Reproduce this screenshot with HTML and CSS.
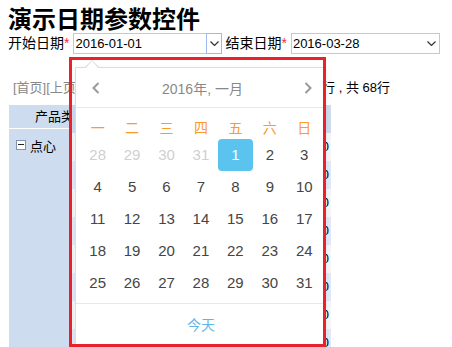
FILE: index.html
```html
<!DOCTYPE html>
<html lang="zh-CN">
<head>
    <meta charset="UTF-8">
    <meta name="viewport" content="width=device-width, initial-scale=1.0">
    <title>演示日期参数控件</title>
    <link rel="stylesheet" href="styles.css">
</head>
<body>
    <h1 class="title">演示日期参数控件</h1>

    <div class="params">
        <label class="param-label">开始日期<span class="req">*</span></label>
        <div class="date-field focus">
            <span class="value">2016-01-01</span>
            <span class="drop">
                <svg width="9" height="5" viewBox="0 0 9 5"><path d="M0.5 0.5 L4.5 4.5 L8.5 0.5" fill="none" stroke="#333" stroke-width="1.2"/></svg>
            </span>

            <div class="calendar">
                <div class="cal-head">
                    <span class="cal-nav">
                        <svg width="8" height="12" viewBox="0 0 8 12"><path d="M6.5 1 L1.5 6 L6.5 11" fill="none" stroke="#9a9a9a" stroke-width="2"/></svg>
                    </span>
                    <span class="cal-title">2016年, 一月</span>
                    <span class="cal-nav">
                        <svg width="8" height="12" viewBox="0 0 8 12"><path d="M1.5 1 L6.5 6 L1.5 11" fill="none" stroke="#9a9a9a" stroke-width="2"/></svg>
                    </span>
                </div>
                <div class="cal-body">
                    <div class="cal-grid">
                        <span class="wk">一</span><span class="wk">二</span><span class="wk">三</span><span class="wk">四</span><span class="wk">五</span><span class="wk">六</span><span class="wk">日</span>

                        <span class="day muted">28</span><span class="day muted">29</span><span class="day muted">30</span><span class="day muted">31</span><span class="day selected">1</span><span class="day">2</span><span class="day">3</span>
                        <span class="day">4</span><span class="day">5</span><span class="day">6</span><span class="day">7</span><span class="day">8</span><span class="day">9</span><span class="day">10</span>
                        <span class="day">11</span><span class="day">12</span><span class="day">13</span><span class="day">14</span><span class="day">15</span><span class="day">16</span><span class="day">17</span>
                        <span class="day">18</span><span class="day">19</span><span class="day">20</span><span class="day">21</span><span class="day">22</span><span class="day">23</span><span class="day">24</span>
                        <span class="day">25</span><span class="day">26</span><span class="day">27</span><span class="day">28</span><span class="day">29</span><span class="day">30</span><span class="day">31</span>
                    </div>
                </div>
                <div class="cal-foot"><span class="today">今天</span></div>
            </div>
        </div>

        <label class="param-label">结束日期<span class="req">*</span></label>
        <div class="date-field">
            <span class="value">2016-03-28</span>
            <span class="drop">
                <svg width="9" height="5" viewBox="0 0 9 5"><path d="M0.5 0.5 L4.5 4.5 L8.5 0.5" fill="none" stroke="#333" stroke-width="1.2"/></svg>
            </span>
        </div>
    </div>

    <div class="pager">
        <span class="nav">[首页][上页][下页][尾页]</span>
        <span class="info">第1-20行 , 共 68行</span>
    </div>

    <div class="report">
        <div class="group-col">
            <div class="group-head">产品类别</div>
            <div class="group-body"><span class="toggle"></span>点心</div>
        </div>
        <div class="data-col">
            <div class="data-head"><span class="cell">产品名称</span><span class="cell num"></span></div>
            <div class="data-row"><span class="cell">饼干</span><span class="cell num">120</span></div>
            <div class="data-row"><span class="cell">糖果</span><span class="cell num">340</span></div>
            <div class="data-row"><span class="cell">桂花糕</span><span class="cell num">210</span></div>
            <div class="data-row"><span class="cell">花生</span><span class="cell num">450</span></div>
            <div class="data-row"><span class="cell">蛋糕</span><span class="cell num">180</span></div>
            <div class="data-row"><span class="cell">薯条</span><span class="cell num">260</span></div>
            <div class="data-row"><span class="cell">燕麦片</span><span class="cell num">300</span></div>
            <div class="data-row"><span class="cell">山渣片</span><span class="cell num">150</span></div>
        </div>
    </div>

    <div class="highlight"></div>
</body>
</html>
```

FILE: styles.css
```css
html, body {
    height: 100%;
    overflow: hidden;
}
body {
    margin: 0;
    padding: 4px 8px 0;
    font-family: "Liberation Sans", "Noto Sans CJK SC", sans-serif;
    font-size: 13px;
    color: #000;
    background: #fff;
}
.title {
    margin: 0;
    font-family: "Noto Sans CJK SC", sans-serif;
    font-size: 24px;
    line-height: 28px;
    font-weight: bold;
}

/* parameter bar */
.params {
    display: flex;
    align-items: center;
    height: 21px;
    margin-top: 1px;
}
.param-label {
    font-size: 14px;
    line-height: 21px;
    margin-right: 4px;
}
.req {
    color: #e8333a;
}
.date-field {
    position: relative;
    display: flex;
    align-items: center;
    width: 149px;
    height: 21px;
    box-sizing: border-box;
    border: 1px solid #c8c8c8;
}
.date-field + .param-label {
    margin-left: 3px;
}
.date-field .value {
    flex: 1;
    padding-left: 1px;
    font-size: 13px;
}
.drop {
    display: flex;
    align-items: center;
    justify-content: center;
    width: 16px;
    height: 21px;
    margin: -1px -1px -1px 0;
    box-sizing: border-box;
}
.focus .drop {
    border: 1px solid #9cbbe9;
}

/* calendar popup */
.calendar {
    position: absolute;
    left: 1px;
    top: 33px;
    z-index: 5;
    width: 251px;
    box-sizing: border-box;
    background: #fff;
    border: 1px solid #ddd;
    box-shadow: 0 2px 6px rgba(0, 0, 0, 0.08);
}
.calendar::before,
.calendar::after {
    content: "";
    position: absolute;
    border-style: solid;
    border-color: transparent;
    border-top: 0;
}
.calendar::before {
    left: 9px;
    top: -8px;
    border-width: 0 7px 7px;
    border-bottom-color: #ddd;
}
.calendar::after {
    left: 10px;
    top: -7px;
    border-width: 0 6px 7px;
    border-bottom-color: #fff;
}
.cal-head {
    display: flex;
    align-items: center;
    justify-content: space-between;
    height: 39px;
    padding: 0 13px 0 16px;
    border-bottom: 1px solid #e8e8e8;
}
.cal-nav {
    display: flex;
}
.cal-title {
    font-size: 14px;
    color: #888;
}
.cal-body {
    padding: 8px 4px 4px;
}
.cal-grid {
    display: grid;
    grid-template-columns: repeat(7, 1fr);
    grid-auto-rows: 32px;
    grid-template-rows: 23px;
    text-align: center;
}
.wk {
    line-height: 24px;
    font-size: 14px;
    color: #fa9b2a;
}
.day {
    line-height: 32px;
    font-size: 15px;
    color: #454545;
    border-radius: 4px;
}
.day.muted {
    color: #cfcfcf;
}
.day.selected {
    background: #5bc4ee;
    color: #fff;
}
.cal-foot {
    height: 42px;
    line-height: 42px;
    text-align: center;
    border-top: 1px solid #e8e8e8;
}
.today {
    font-size: 14px;
    color: #5fb6e6;
}

/* pager */
.pager {
    display: flex;
    width: 382px;
    margin-top: 24px;
    line-height: 20px;
}
.pager .nav {
    padding-left: 5px;
    color: #888;
}
.pager .info {
    margin-left: auto;
}

/* report table */
.report {
    display: flex;
    width: 322px;
    margin: 7px 0 0 1px;
}
.group-col {
    width: 61px;
    background: #cddcee;
}
.group-head {
    height: 23px;
    line-height: 23px;
    padding-left: 26px;
    white-space: nowrap;
    overflow: hidden;
    border-bottom: 1px solid #fff;
}
.group-body {
    display: flex;
    align-items: center;
    height: 32px;
    padding-left: 7px;
    white-space: nowrap;
}
.toggle {
    position: relative;
    width: 10px;
    height: 10px;
    margin-right: 4px;
    box-sizing: border-box;
    border: 1px solid #8493a8;
    background: #fff;
}
.toggle::after {
    content: "";
    position: absolute;
    left: 1px;
    right: 1px;
    top: 3px;
    height: 1px;
    background: #222;
}
.data-col {
    flex: 1;
}
.data-head,
.data-row {
    display: flex;
    height: 28px;
    line-height: 28px;
}
.data-head {
    background: #cddcee;
}
.data-row:nth-child(even) {
    background: #f7f7f7;
}
.data-row:nth-child(odd) {
    background: #e3e9f8;
}
.cell {
    flex: 1;
    padding-left: 10px;
}
.cell.num {
    flex: 0 0 60px;
    padding: 0 2px 0 0;
    text-align: right;
}

/* annotation frame */
.highlight {
    position: absolute;
    left: 69px;
    top: 57px;
    z-index: 10;
    width: 257px;
    height: 290px;
    box-sizing: border-box;
    border: 3px solid #e8212b;
}
```
